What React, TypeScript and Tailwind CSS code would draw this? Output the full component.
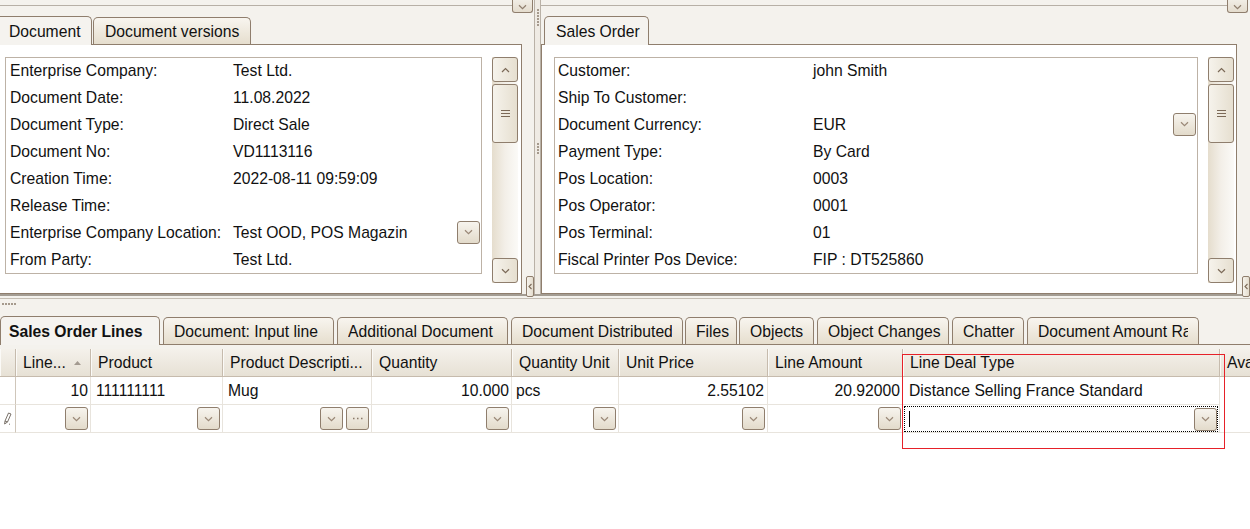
import { ReactNode } from "react";

type InfoRow = { label: string; value: string; drop?: boolean };

const leftRows: InfoRow[] = [
  { label: "Enterprise Company:", value: "Test Ltd." },
  { label: "Document Date:", value: "11.08.2022" },
  { label: "Document Type:", value: "Direct Sale" },
  { label: "Document No:", value: "VD1113116" },
  { label: "Creation Time:", value: "2022-08-11 09:59:09" },
  { label: "Release Time:", value: "" },
  { label: "Enterprise Company Location:", value: "Test OOD, POS Magazin", drop: true },
  { label: "From Party:", value: "Test Ltd." },
];

const rightRows: InfoRow[] = [
  { label: "Customer:", value: "john Smith" },
  { label: "Ship To Customer:", value: "" },
  { label: "Document Currency:", value: "EUR", drop: true },
  { label: "Payment Type:", value: "By Card" },
  { label: "Pos Location:", value: "0003" },
  { label: "Pos Operator:", value: "0001" },
  { label: "Pos Terminal:", value: "01" },
  { label: "Fiscal Printer Pos Device:", value: "FIP : DT525860" },
];

// bottom tab strip (width + margin per tab)
const lineTabs = [
  { label: "Document: Input line", cls: "w-[171px] ml-[3px] pr-[2px]" },
  { label: "Additional Document", cls: "w-[171px] ml-[3px] pr-[2px]" },
  { label: "Document Distributed", cls: "w-[172px] ml-[3px] pr-[10px]" },
  { label: "Files", cls: "w-[52px] ml-[2px] pr-0" },
  { label: "Objects", cls: "w-[75px] ml-[2px] pr-0" },
  { label: "Object Changes", cls: "w-[132px] ml-[3px] pr-0" },
  { label: "Chatter", cls: "w-[72px] ml-[3px] pr-0" },
  { label: "Document Amount Rates", cls: "w-[172px] ml-[3px] pr-[10px]" },
];

const Chevron = ({ up = false, color = "#7b6957" }: { up?: boolean; color?: string }) => (
  <svg width="9" height="6" viewBox="0 0 9 6">
    <path
      d={up ? "M1 5 L4.5 1.5 L8 5" : "M1 1.2 L4.5 4.6 L8 1.2"}
      fill="none"
      stroke={color}
      strokeWidth="1.2"
    />
  </svg>
);

const DropBtn = ({ children }: { children?: ReactNode }) => (
  <div className="w-[23px] h-[23px] shrink-0 rounded-[3px] border border-[#8f7e6d] bg-linear-to-b from-[#f7f4ee] to-[#e3dbcb] flex items-center justify-center">
    {children ?? <Chevron color="#9a8877" />}
  </div>
);

const ScrollBar = () => (
  <div className="w-[26px] h-[226px] shrink-0 flex flex-col bg-linear-to-r from-[#e5ddcd] via-[#f3efe8] to-[#fbfaf7]">
    {/* up button */}
    <div className="h-[25px] rounded-[3px] border border-[#8f7e6d] bg-linear-to-r from-[#f6f3ec] to-[#e6dfd0] flex items-center justify-center">
      <Chevron up />
    </div>
    <div className="h-[2px]" />
    {/* thumb */}
    <div className="h-[59px] rounded-[3px] border border-[#8f7e6d] bg-linear-to-r from-[#f6f3ec] to-[#e6dfd0] flex items-center justify-center">
      <svg width="9" height="7" viewBox="0 0 9 7">
        <path d="M0 0.5 H9 M0 3.5 H9 M0 6.5 H9" stroke="#7b6957" strokeWidth="1" />
      </svg>
    </div>
    <div className="flex-1" />
    {/* down button */}
    <div className="h-[25px] rounded-[3px] border border-[#8f7e6d] bg-linear-to-r from-[#f6f3ec] to-[#e6dfd0] flex items-center justify-center">
      <Chevron />
    </div>
  </div>
);

const InfoBox = ({ rows, cols, pad }: { rows: InfoRow[]; cols: string; pad: string }) => (
  <div className="flex-1 h-[217px] border border-[#bdb2a6] bg-white overflow-hidden">
    {rows.map((r, i) => (
      <div key={i} className={`grid ${cols} h-[27px] items-center -translate-y-[1px]`}>
        <div className={`${pad} whitespace-nowrap`}>{r.label}</div>
        <div className="flex items-center justify-between pr-[1px] whitespace-nowrap">
          <span>{r.value}</span>
          {r.drop && <DropBtn />}
        </div>
      </div>
    ))}
  </div>
);

const TopStrip = ({ pad }: { pad: string }) => (
  <div className={`h-[17px] flex ${pad}`}>
    <div className="flex-1 mt-[5px] h-0 border-t border-[#b7b0a6]" />
    <div className="w-[21px] h-[13px] rounded-b-[3px] border-x border-b border-[#8f7e6d] bg-linear-to-b from-[#f1ede5] to-[#e4dccd] flex items-end justify-center pb-[2px]">
      <Chevron color="#8f7e6d" />
    </div>
  </div>
);

const SideBtn = () => (
  <div className="relative z-10 w-[8px] h-[21px] -mb-[3px] rounded-[2px] border border-[#8f7e6d] bg-linear-to-r from-[#f6f3ec] to-[#e4dccd] flex items-center justify-center">
    <svg width="4" height="7" viewBox="0 0 4 7">
      <path d="M3.5 1 L1 3.5 L3.5 6" fill="none" stroke="#7b6957" strokeWidth="1.1" />
    </svg>
  </div>
);

const Dots = ({ n, vertical = false }: { n: number; vertical?: boolean }) => (
  <div className={vertical ? "flex flex-col gap-[1px]" : "flex gap-[1px]"}>
    {Array.from({ length: n }).map((_, i) => (
      <div key={i} className="w-[2px] h-[2px] bg-[#a59a8d]" />
    ))}
  </div>
);

const inactiveTab =
  "h-[27px] rounded-t-[5px] border border-b-0 border-[#8f7e6d] bg-linear-to-b from-[#f8f5ef] to-[#e6dece] flex items-center pt-[1px]";
const activeTab =
  "relative z-10 h-[29px] -mb-px rounded-t-[5px] border border-b-0 border-[#8f7e6d] bg-[#f5f3ef] flex items-center pt-[1px]";

const headCell =
  "h-[28px] shrink-0 border-r border-b border-[#c6bbad] shadow-[inset_1px_0_0_#fbfaf7] bg-linear-to-b from-[#f4f1eb] to-[#e7e1d5] flex items-center pl-[7px] whitespace-nowrap overflow-hidden";
const cell = "h-[28px] shrink-0 border-r border-b border-[#e8e4dd] bg-white flex items-center whitespace-nowrap overflow-hidden";

export default function App() {
  return (
    <div className="relative w-[1250px] h-[529px] overflow-hidden bg-white text-[15.7px] text-[#111] font-['Liberation_Sans',Arial,sans-serif]">
      <div className="bg-[#f4f2ed]">
        {/* top panels */}
        <div className="flex h-[294px]">
          {/* left panel */}
          <div className="w-[534px] flex flex-col">
            <TopStrip pad="pr-[1px]" />
            <div className="flex items-end h-[27px]">
              <div className={`${activeTab} w-[92px] border-l-0 rounded-tl-none pl-[9px]`}>Document</div>
              <div className={`${inactiveTab} w-[158px] ml-[1px] pl-[11px]`}>Document versions</div>
            </div>
            <div className="flex flex-1">
              <div className="w-[522px] border-t border-r border-b border-[#8f7e6d] bg-white flex gap-[10px] pl-[5px] pr-[3px] pt-[12px]">
                <InfoBox rows={leftRows} cols="grid-cols-[227px_1fr]" pad="pl-[4px]" />
                <ScrollBar />
              </div>
              <div className="flex-1 flex flex-col justify-end pl-[4px]">
                <SideBtn />
              </div>
            </div>
          </div>

          {/* vertical splitter */}
          <div className="w-[7px] border-x border-[#b9b1a6] bg-[#efebe4] flex flex-col items-center">
            <div className="mt-[9px]">
              <Dots n={6} vertical />
            </div>
            <div className="mt-[117px]">
              <Dots n={4} vertical />
            </div>
          </div>

          {/* right panel */}
          <div className="flex-1 flex flex-col">
            <TopStrip pad="pr-[2px]" />
            <div className="flex items-end h-[27px]">
              <div className={`${activeTab} w-[105px] ml-[3px] pl-[11px]`}>Sales Order</div>
            </div>
            <div className="flex flex-1">
              <div className="w-[696px] border border-[#8f7e6d] bg-white flex gap-[10px] pl-[12px] pr-[2px] pt-[12px]">
                <InfoBox rows={rightRows} cols="grid-cols-[258px_1fr]" pad="pl-[3px]" />
                <ScrollBar />
              </div>
              <div className="flex-1 flex flex-col justify-end pl-[5px]">
                <SideBtn />
              </div>
            </div>
          </div>
        </div>

        {/* horizontal splitter */}
        <div className="h-[22px] border-t-2 border-[#a49d93]">
          <div className="mt-[2px] border-t border-[#c4bdb3]" />
          <div className="mt-[4px] pl-[2px]">
            <Dots n={5} />
          </div>
        </div>

        {/* bottom tabs */}
        <div className="flex items-end h-[29px] border-b border-[#8f7e6d]">
          <div className={`${activeTab} w-[160px] pl-[8px] font-bold`}>Sales Order Lines</div>
          {lineTabs.map((t) => (
            <div key={t.label} className={`${inactiveTab} ${t.cls} pl-[10px]`}>
              <div className="w-full overflow-hidden whitespace-nowrap">{t.label}</div>
            </div>
          ))}
        </div>
        <div className="h-[4px]" />
      </div>

      {/* grid */}
      <div className="flex">
        <div className={`${headCell} w-[16px] pl-0`} />
        <div className={`${headCell} w-[75px]`}>
          <span>Line...</span>
          <svg className="ml-auto mr-[9px]" width="7" height="4" viewBox="0 0 7 4">
            <path d="M0 4 L3.5 0 L7 4 Z" fill="#a39a90" />
          </svg>
        </div>
        <div className={`${headCell} w-[132px]`}>Product</div>
        <div className={`${headCell} w-[149px]`}>Product Descripti...</div>
        <div className={`${headCell} w-[140px]`}>Quantity</div>
        <div className={`${headCell} w-[107px]`}>Quantity Unit</div>
        <div className={`${headCell} w-[149px]`}>Unit Price</div>
        <div className={`${headCell} w-[135px]`}>Line Amount</div>
        <div className={`${headCell} w-[317px]`}>Line Deal Type</div>
        <div className={`${headCell} flex-1 border-r-0`}>Available</div>
      </div>

      {/* row 1 */}
      <div className="flex">
        <div className={`${cell} w-[16px] bg-[#eeeae3] border-r-[#cfc6ba]`} />
        <div className={`${cell} w-[75px] justify-end pr-[2px]`}>10</div>
        <div className={`${cell} w-[132px] pl-[5px]`}>111111111</div>
        <div className={`${cell} w-[149px] pl-[5px]`}>Mug</div>
        <div className={`${cell} w-[140px] justify-end pr-[2px]`}>10.000</div>
        <div className={`${cell} w-[107px] pl-[4px]`}>pcs</div>
        <div className={`${cell} w-[149px] justify-end pr-[3px]`}>2.55102</div>
        <div className={`${cell} w-[135px] justify-end pr-[2px]`}>20.92000</div>
        <div className={`${cell} w-[317px] pl-[6px]`}>Distance Selling France Standard</div>
        <div className={`${cell} flex-1 bg-[#ececec] border-r-0 border-b-white`} />
      </div>

      {/* row 2 (editing) */}
      <div className="flex">
        <div className={`${cell} w-[16px] bg-[#eeeae3] border-r-[#cfc6ba] pl-[3px]`}>
          <svg width="9" height="13" viewBox="0 0 9 13">
            <path d="M5.5 1 L8 2 L4.5 10 L2 9 Z" fill="none" stroke="#6b6259" strokeWidth="0.9" />
            <path d="M2 9 L1.6 12 L4.5 10" fill="none" stroke="#6b6259" strokeWidth="0.9" />
            <path d="M6 12.2 H7" stroke="#6b6259" strokeWidth="0.9" />
          </svg>
        </div>
        <div className={`${cell} w-[75px] justify-end pr-[2px]`}>
          <DropBtn />
        </div>
        <div className={`${cell} w-[132px] justify-end pr-[2px]`}>
          <DropBtn />
        </div>
        <div className={`${cell} w-[149px] justify-end pr-[2px] gap-[3px]`}>
          <DropBtn />
          <DropBtn>
            <svg width="11" height="3" viewBox="0 0 11 3">
              <path d="M1 1.5 H2.5 M5 1.5 H6.5 M9 1.5 H10.5" stroke="#8a7a6a" strokeWidth="1.4" />
            </svg>
          </DropBtn>
        </div>
        <div className={`${cell} w-[140px] justify-end pr-[2px]`}>
          <DropBtn />
        </div>
        <div className={`${cell} w-[107px] justify-end pr-[2px]`}>
          <DropBtn />
        </div>
        <div className={`${cell} w-[149px] justify-end pr-[2px]`}>
          <DropBtn />
        </div>
        <div className={`${cell} w-[135px] justify-end pr-[1px]`}>
          <DropBtn />
        </div>
        <div className={`${cell} w-[317px] px-[1px]`}>
          <div className="flex-1 h-[26px] mt-[1px] border border-dotted border-black flex items-center justify-between">
            <div className="ml-[4px] w-px h-[16px] bg-black" />
            <DropBtn />
          </div>
        </div>
        <div className={`${cell} flex-1 bg-[#ececec] border-r-0`} />
      </div>

      {/* highlight frame */}
      <div className="absolute left-[902px] top-[354px] w-[323px] h-[95px] border border-[#e62129]" />
    </div>
  );
}
